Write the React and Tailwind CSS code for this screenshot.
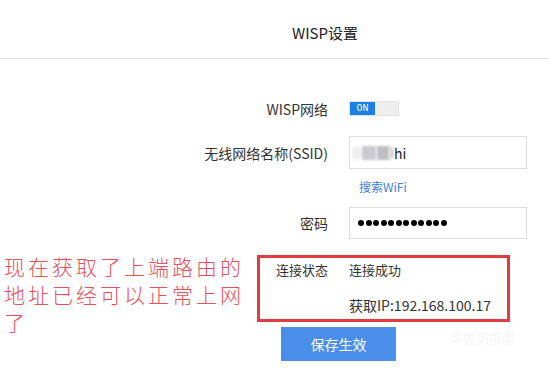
import React from "react";

const cjk = { fontFamily: '"Noto Sans CJK SC", "Liberation Sans", sans-serif' };

export default function App() {
  return (
    <div className="relative w-[549px] h-[384px] overflow-hidden bg-white text-[#333]" style={cjk}>
      {/* header */}
      <div className="h-[59px] border-b border-[#e3e3e3] pl-[292px] pt-[24px]">
        <div className="text-[15px] leading-[18px] text-[#222]">WISP设置</div>
      </div>

      {/* toggle row */}
      <div className="mt-[42px] flex items-center h-[15px]">
        <div className="w-[328px] text-right text-[14px] leading-[18px]">WISP网络</div>
        <div className="ml-[21px] flex h-[15px] w-[50px] border border-[#e2e2e2] bg-[#eeeeee]">
          <div className="flex w-[25px] items-center justify-center bg-[#1a80e4] text-[10px] leading-none text-white" style={{ fontFamily: '"Liberation Mono", monospace' }}>
            ON
          </div>
        </div>
      </div>

      {/* SSID row */}
      <div className="mt-[20px] flex items-center h-[33px]">
        <div className="w-[328px] text-right text-[14px] leading-[18px]">无线网络名称(SSID)</div>
        <div className="ml-[21px] flex h-[33px] w-[178px] items-center border border-[#dddddd] bg-white">
          <div className="ml-[2px] flex items-center">
            <div className="h-[14px] w-[10px] rounded-full bg-[#efefef] blur-[1px]" />
            <div className="h-[14px] w-[14px] bg-[#cbcbcf] blur-[1px]" />
            <div className="ml-[1px] h-[14px] w-[12px] bg-[#bfbfc3] blur-[1px]" />
            <div className="h-[14px] w-[5px] rounded-r-full bg-[#d8d8d8] blur-[1px]" />
          </div>
          <span className="text-[14px] leading-none text-[#222]">hi</span>
        </div>
      </div>

      {/* search wifi */}
      <div className="mt-[9px] flex h-[18px] items-center">
        <div className="ml-[359px] text-[12px] leading-[18px] text-[#3d7fd6]">搜索WiFi</div>
      </div>

      {/* password */}
      <div className="mt-[11px] flex items-center h-[32px]">
        <div className="w-[328px] text-right text-[14px] leading-[18px]">密码</div>
        <div className="ml-[21px] flex h-[32px] w-[178px] items-center gap-[1.5px] border border-[#dddddd] pl-[8px]">
          {Array.from({ length: 12 }).map((_, i) => (
            <div key={i} className="h-[6px] w-[6px] rounded-full bg-black" />
          ))}
        </div>
      </div>

      {/* status box */}
      <div className="mt-[16px] ml-[257px] w-[253px] border-[3px] border-[#e23b40] pt-[2px] pb-[4px]">
        <div className="flex h-[20px] items-center">
          <div className="w-[68px] text-right text-[13px] leading-[20px]">连接状态</div>
          <div className="ml-[21px] text-[13px] leading-[20px]">连接成功</div>
        </div>
        <div className="mt-[15px] flex h-[20px] items-center">
          <div className="ml-[89px] text-[14px] leading-[20px]">获取IP:192.168.100.17</div>
        </div>
      </div>

      {/* button */}
      <div className="mt-[5px] ml-[281px] flex h-[34px] w-[115px] items-center justify-center bg-[#4b8eea] text-[14px] text-white">
        保存生效
      </div>

      {/* annotation text */}
      <div className="absolute left-[4px] top-[252px] w-[252px] text-[21px] font-light leading-[28px] tracking-[3px] text-[#e9505a]">
        现在获取了上端路由的地址已经可以正常上网了
      </div>

      {/* watermark */}
      <div className="absolute left-[452px] top-[330px] text-[13px] leading-[16px] text-[#f8f8f8] font-bold">
        S 如何指南
      </div>
    </div>
  );
}
